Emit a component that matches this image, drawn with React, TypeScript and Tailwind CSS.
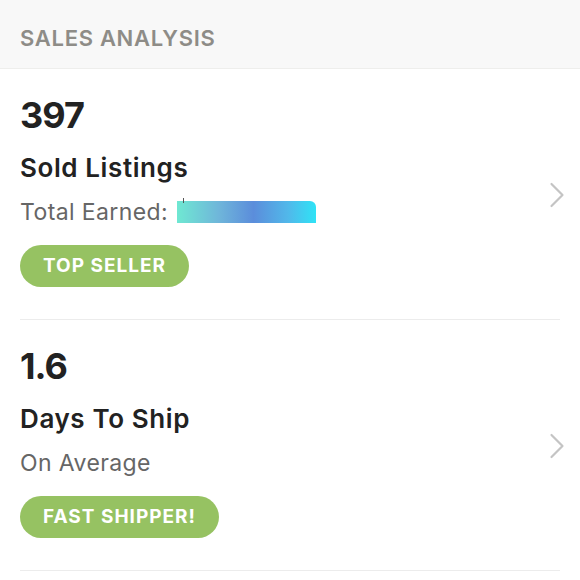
import { ChevronRight } from 'lucide-react';

type Stat = {
  value: string;
  title: string;
  sub: React.ReactNode;
  badge: string;
};

const stats: Stat[] = [
  {
    value: '397',
    title: 'Sold Listings',
    sub: (
      <span className="flex items-center">
        Total Earned:
        <span className="relative ml-[9px] inline-block h-[22px] w-[139px] rounded-tr-[6px] bg-[linear-gradient(90deg,#6fe8d2_0%,#6fb6da_30%,#5b8ddb_55%,#51b8ea_80%,#2fe3f6_100%)]">
          <span className="absolute left-[6px] top-[-3px] h-[5px] w-px bg-[#555]" />
        </span>
      </span>
    ),
    badge: 'TOP SELLER',
  },
  {
    value: '1.6',
    title: 'Days To Ship',
    sub: 'On Average',
    badge: 'FAST SHIPPER!',
  },
];

function StatRow({ stat }: { stat: Stat }) {
  return (
    <div className="flex items-center border-b border-[#ececec] pt-[26px] pb-[32px]">
      <div className="flex-1">
        <div className="text-[36px] font-bold leading-[40px] tracking-[-1px] text-[#222]">{stat.value}</div>
        <div className="mt-[17px] text-[26px] font-semibold leading-[32px] tracking-[0.6px] text-[#222]">{stat.title}</div>
        <div className="mt-[14px] text-[23px] leading-[28px] tracking-[0.4px] text-[#666]">{stat.sub}</div>
        <div className="mt-[19px] inline-flex h-[42px] items-center rounded-full bg-[#96c262] px-[23px] text-[19px] font-bold tracking-[1px] text-white">
          {stat.badge}
        </div>
      </div>
      <ChevronRight size={44} strokeWidth={1.2} className="mr-[-19px] mt-[8px] text-[#c4c4c4]" />
    </div>
  );
}

export default function App() {
  return (
    <div className="min-h-screen bg-white font-['Inter',sans-serif]">
      <div className="flex h-[69px] items-center border-b border-[#eeeeec] bg-[#f8f8f8] px-[20px] pt-[8px]">
        <span className="text-[22px] font-semibold tracking-[0.7px] text-[#8e8c87]">SALES ANALYSIS</span>
      </div>
      <div className="px-[20px]">
        {stats.map((s) => (
          <StatRow key={s.title} stat={s} />
        ))}
      </div>
    </div>
  );
}
